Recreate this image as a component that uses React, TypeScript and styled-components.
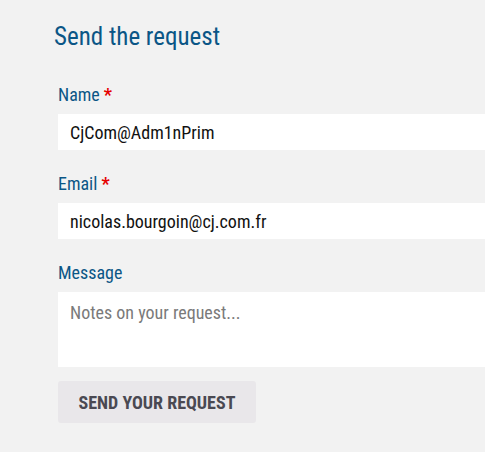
import React from 'react'
import styled, { createGlobalStyle } from 'styled-components'

const GlobalStyle = createGlobalStyle`
  html, body {
    margin: 0;
    padding: 0;
    background: #f2f2f2;
    overflow: hidden;
  }
  body {
    font-family: "Roboto Condensed", "Liberation Sans", sans-serif;
  }
`

const Page = styled.div`
  width: 485px;
  height: 452px;
  overflow: hidden;
  background: #f2f2f2;
  box-sizing: border-box;
  padding: 23px 0 0 58px;
`

const Title = styled.h2`
  margin: 0 0 34px -4px;
  font-size: 25px;
  line-height: 28px;
  font-weight: 400;
  color: #0b5686;
`

const Form = styled.form`
  display: flex;
  flex-direction: column;
  width: 480px;
`

const Field = styled.div`
  display: flex;
  flex-direction: column;
  gap: 9px;
  margin-bottom: 24px;
  &:last-of-type {
    margin-bottom: 14px;
  }
`

const Label = styled.label`
  font-size: 18px;
  line-height: 20px;
  color: #0b5686;
`

const Required = styled.span`
  color: #e60000;
  font-weight: 700;
  margin-left: 4px;
`

const Input = styled.input`
  box-sizing: border-box;
  width: 100%;
  height: 36px;
  border: none;
  outline: none;
  background: #fff;
  padding: 0 12px;
  font-family: inherit;
  font-size: 18px;
  color: #111;
`

const TextArea = styled.textarea`
  box-sizing: border-box;
  width: 100%;
  height: 75px;
  border: none;
  outline: none;
  resize: none;
  background: #fff;
  padding: 10px 12px;
  font-family: inherit;
  font-size: 18px;
  line-height: 22px;
  color: #111;
  &::placeholder {
    color: #7a7a7a;
  }
`

const Button = styled.button`
  align-self: flex-start;
  width: 198px;
  height: 42px;
  border: none;
  border-radius: 3px;
  background: #e9e7ea;
  color: #4a4952;
  font-family: inherit;
  font-size: 18px;
  font-weight: 700;
  text-transform: uppercase;
  cursor: pointer;
`

export default function App() {
  return (
    <Page>
      <GlobalStyle />
      <Title>Send the request</Title>
      <Form onSubmit={e => e.preventDefault()}>
        <Field>
          <Label>
            Name<Required>*</Required>
          </Label>
          <Input defaultValue="CjCom@Adm1nPrim" />
        </Field>
        <Field>
          <Label>
            Email<Required>*</Required>
          </Label>
          <Input defaultValue="nicolas.bourgoin@cj.com.fr" />
        </Field>
        <Field>
          <Label>Message</Label>
          <TextArea placeholder="Notes on your request..." />
        </Field>
        <Button type="submit">Send your request</Button>
      </Form>
    </Page>
  )
}
